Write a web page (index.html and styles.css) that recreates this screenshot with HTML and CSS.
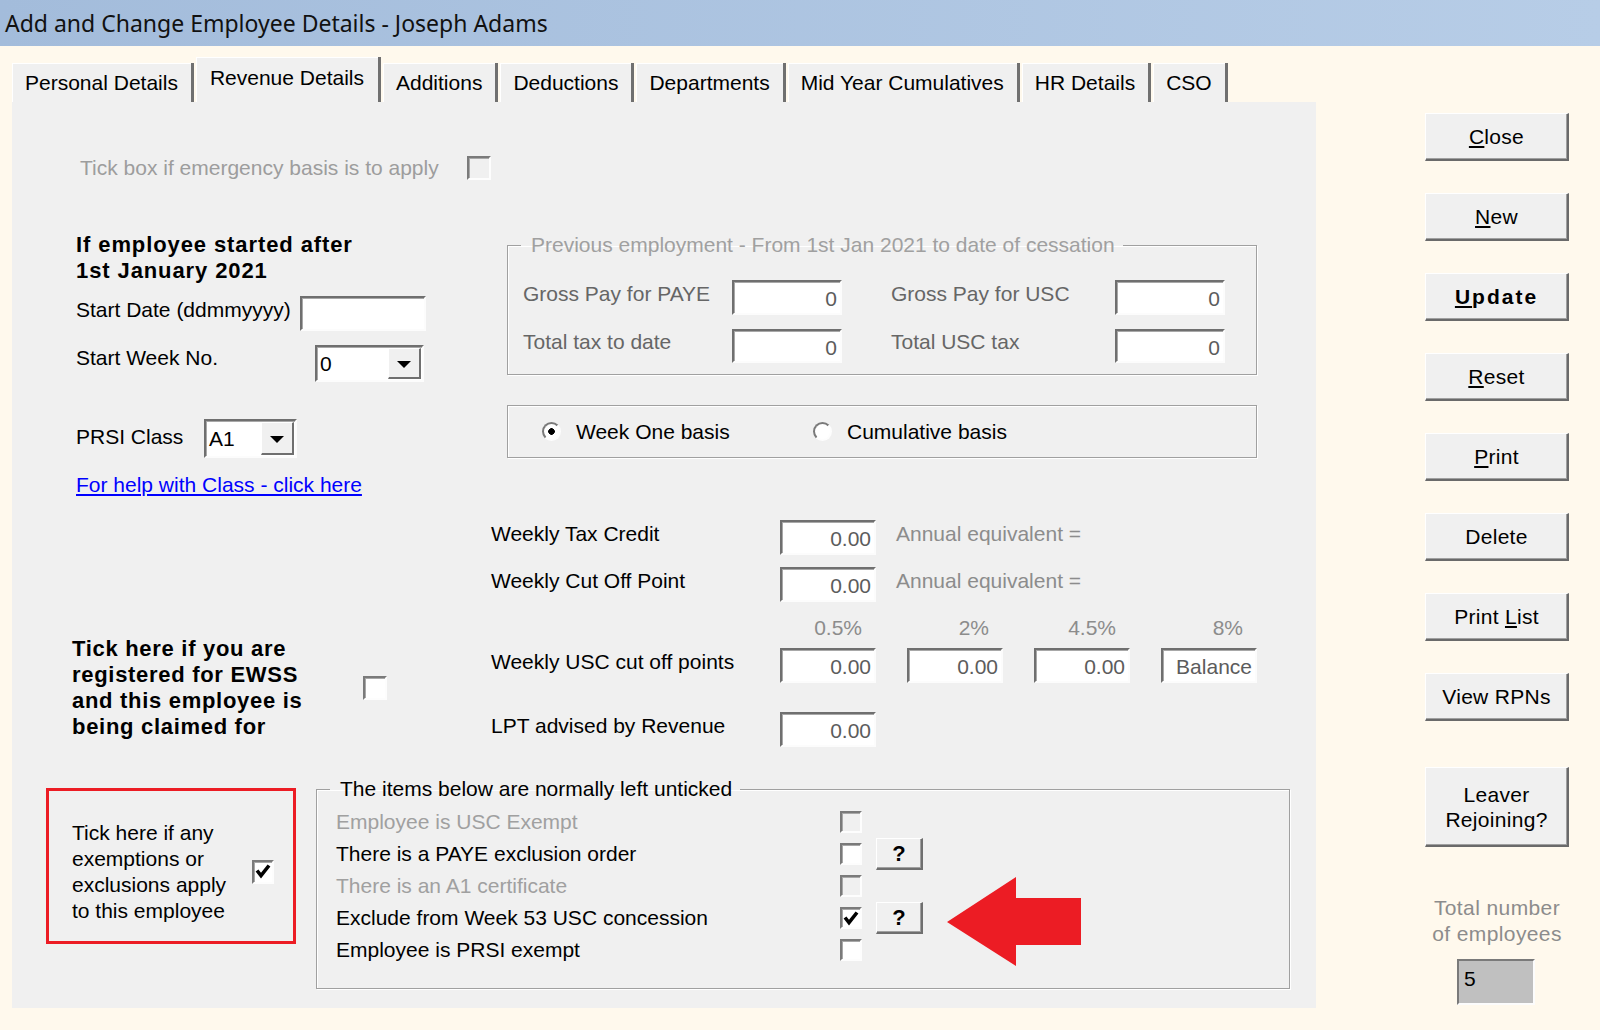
FILE: index.html
```html
<!DOCTYPE html>
<html lang="en">
<head>
  <meta charset="UTF-8">
  <title>Add and Change Employee Details - Joseph Adams</title>
  <link rel="stylesheet" href="styles.css">
</head>
<body>
  <div class="titlebar">Add and Change Employee Details - Joseph Adams</div>

  <div class="window">
    <div class="main">
      <div class="tabs">
        <div class="tab">Personal Details</div>
        <div class="tab active">Revenue Details</div>
        <div class="tab">Additions</div>
        <div class="tab">Deductions</div>
        <div class="tab">Departments</div>
        <div class="tab">Mid Year Cumulatives</div>
        <div class="tab">HR Details</div>
        <div class="tab">CSO</div>
      </div>

      <div class="panel">
        <div class="emergency">
          <span class="emergency-label">Tick box if emergency basis is to apply</span>
          <span class="chk off"></span>
        </div>

        <div class="upper">
          <div class="left-col">
            <div class="heading">If employee started after<br>1st January 2021</div>
            <div class="row start-date">
              <span class="lbl">Start Date (ddmmyyyy)</span>
              <span class="field"></span>
            </div>
            <div class="row start-week">
              <span class="lbl">Start Week No.</span>
              <span class="combo"><span class="combo-val">0</span><span class="combo-btn"></span></span>
            </div>
            <div class="row prsi">
              <span class="lbl">PRSI Class</span>
              <span class="combo"><span class="combo-val">A1</span><span class="combo-btn"></span></span>
            </div>
            <a class="help-link" href="#">For help with Class - click here</a>
            <div class="ewss">
              <div class="ewss-text">Tick here if you are<br>registered for EWSS<br>and this employee is<br>being claimed for</div>
              <span class="chk"></span>
            </div>
          </div>

          <div class="right-col">
            <fieldset class="prev">
              <legend>Previous employment - From 1st Jan 2021 to date of cessation</legend>
              <div class="prev-grid">
                <span class="dim">Gross Pay for PAYE</span>
                <span class="field num">0</span>
                <span class="dim lbl2">Gross Pay for USC</span>
                <span class="field num">0</span>
                <span class="dim">Total tax to date</span>
                <span class="field num">0</span>
                <span class="dim lbl2">Total USC tax</span>
                <span class="field num">0</span>
              </div>
            </fieldset>

            <div class="basis">
              <label class="radio-item"><span class="radio on"></span>Week One basis</label>
              <label class="radio-item"><span class="radio"></span>Cumulative basis</label>
            </div>

            <div class="wrow tax">
              <span class="wlbl">Weekly Tax Credit</span>
              <span class="field num w96">0.00</span>
              <span class="annual">Annual equivalent =</span>
            </div>
            <div class="wrow cut">
              <span class="wlbl">Weekly Cut Off Point</span>
              <span class="field num w96">0.00</span>
              <span class="annual">Annual equivalent =</span>
            </div>
            <div class="pct">
              <span>0.5%</span>
              <span>2%</span>
              <span>4.5%</span>
              <span>8%</span>
            </div>
            <div class="wrow usc">
              <span class="wlbl">Weekly USC cut off points</span>
              <span class="field num w96">0.00</span>
              <span class="field num w96">0.00</span>
              <span class="field num w96">0.00</span>
              <span class="field num w96">Balance</span>
            </div>
            <div class="wrow lpt">
              <span class="wlbl">LPT advised by Revenue</span>
              <span class="field num w96">0.00</span>
            </div>
          </div>
        </div>

        <div class="lower">
          <div class="highlight">
            <div class="hl-row">
              <div class="hl-text">Tick here if any<br>exemptions or<br>exclusions apply<br>to this employee</div>
              <span class="chk"><svg viewBox="0 0 19 19"><path d="M3 8.5 L7 13.5 L15 3.5" fill="none" stroke="#000" stroke-width="3.6"/></svg></span>
            </div>
          </div>

          <fieldset class="untick">
            <legend>The items below are normally left unticked</legend>
            <div class="item">
              <span class="item-lbl dim2">Employee is USC Exempt</span>
              <span class="chk off"></span>
            </div>
            <div class="item">
              <span class="item-lbl">There is a PAYE exclusion order</span>
              <span class="chk"></span>
              <span class="qbtn">?</span>
            </div>
            <div class="item">
              <span class="item-lbl dim2">There is an A1 certificate</span>
              <span class="chk off"></span>
            </div>
            <div class="item flagged">
              <span class="item-lbl">Exclude from Week 53 USC concession</span>
              <span class="chk"><svg viewBox="0 0 19 19"><path d="M3 8.5 L7 13.5 L15 3.5" fill="none" stroke="#000" stroke-width="3.6"/></svg></span>
              <span class="qbtn">?</span>
              <svg class="arrow" viewBox="0 0 134 89"><polygon points="0,45 69,0 69,21 134,21 134,68 69,68 69,89" fill="#ec1c24"/></svg>
            </div>
            <div class="item">
              <span class="item-lbl">Employee is PRSI exempt</span>
              <span class="chk"></span>
            </div>
          </fieldset>
        </div>
      </div>
    </div>

    <div class="side">
      <div class="btn"><span><u>C</u>lose</span></div>
      <div class="btn"><span><u>N</u>ew</span></div>
      <div class="btn update"><span><u>U</u>pdate</span></div>
      <div class="btn"><span><u>R</u>eset</span></div>
      <div class="btn"><span><u>P</u>rint</span></div>
      <div class="btn"><span>Delete</span></div>
      <div class="btn"><span>Print <u>L</u>ist</span></div>
      <div class="btn"><span>View RPNs</span></div>
      <div class="btn leaver"><span>Leaver<br>Rejoining?</span></div>
      <div class="total">Total number<br>of employees</div>
      <div class="count">5</div>
    </div>
  </div>
</body>
</html>
```

FILE: styles.css
```css
body {
  margin: 0;
  width: 1600px;
  height: 1030px;
  overflow: hidden;
  background: #fff9ed;
  font-family: "Liberation Sans", Arial, sans-serif;
  font-size: 21px;
  color: #000;
}
.titlebar {
  height: 46px;
  line-height: 46px;
  padding-left: 5px;
  background: linear-gradient(to right, #a3bcdb, #b7cde7);
  font-family: "Noto Sans", sans-serif;
  font-size: 23px;
  color: #111;
  white-space: nowrap;
}
.window {
  display: flex;
  padding-left: 12px;
}
.main { width: 1304px; }

/* tabs */
.tabs {
  display: flex;
  align-items: flex-end;
  height: 56px;
}
.tab {
  height: 39px;
  line-height: 39px;
  padding: 0 13px 0 13px;
  margin-right: 2px;
  background: #f0f0f0;
  border-right: 3px solid #707070;
  box-shadow: inset 1px 1px 0 #fff;
  white-space: nowrap;
}
.tab.active {
  height: 45px;
  line-height: 42px;
  padding: 0 14px 0 14px;
}

.panel {
  height: 906px;
  background: #f0f0f0;
  overflow: hidden;
}

/* shared widgets */
.chk {
  box-sizing: border-box;
  width: 23px;
  height: 23px;
  flex: none;
  background: #fff;
  border: 2px solid;
  border-color: #7a7a7a #fdfdfd #fdfdfd #7a7a7a;
  box-shadow: inset 1px 1px 0 #a8a8a8;
}
.chk.off { background: #f0f0f0; }
.chk svg { display: block; width: 19px; height: 19px; }
.field {
  box-sizing: border-box;
  display: block;
  flex: none;
  background: #fff;
  border: 2px solid;
  border-color: #6f6f6f #fcfcfc #fcfcfc #6f6f6f;
  box-shadow: inset 1px 1px 0 #a8a8a8;
  color: #5c5c5c;
}
.field.num {
  text-align: right;
  padding-right: 3px;
  line-height: 33px;
}
.combo {
  box-sizing: border-box;
  display: flex;
  flex: none;
  background: #fff;
  border: 2px solid;
  border-color: #6f6f6f #fcfcfc #fcfcfc #6f6f6f;
  box-shadow: inset 1px 1px 0 #a8a8a8;
}
.combo-val {
  flex: 1;
  padding-left: 3px;
  align-self: center;
}
.combo-btn {
  box-sizing: border-box;
  width: 33px;
  margin: 1px;
  background: #f0f0f0;
  border: 1px solid;
  border-width: 1px 2px 2px 1px;
  border-color: #fff #6f6f6f #6f6f6f #fff;
  display: flex;
  align-items: center;
  justify-content: center;
}
.combo-btn::after {
  content: "";
  border-left: 7px solid transparent;
  border-right: 7px solid transparent;
  border-top: 7px solid #000;
  margin-top: 3px;
}
.radio {
  box-sizing: border-box;
  width: 19px;
  height: 19px;
  flex: none;
  border-radius: 50%;
  border: 2px solid;
  border-color: #7a7a7a #fdfdfd #fdfdfd #7a7a7a;
  background: #fff;
}
.radio.on { background: radial-gradient(circle, #000 0 3px, #fff 3.6px); }

/* emergency line */
.emergency {
  display: flex;
  align-items: center;
  margin-top: 54px;
  padding-left: 68px;
  height: 24px;
  color: #9d9d9d;
}
.emergency-label { width: 387px; }
.emergency .chk { width: 24px; height: 24px; }

.upper {
  display: flex;
  margin-top: 52px;
}

/* left column */
.left-col {
  box-sizing: border-box;
  width: 479px;
  padding-left: 64px;
}
.heading {
  font-weight: bold;
  font-size: 22px;
  letter-spacing: 0.9px;
  line-height: 26px;
  white-space: nowrap;
}
.row {
  display: flex;
  align-items: center;
}
.lbl { white-space: nowrap; }
.start-date { margin-top: 12px; height: 35px; }
.start-date .lbl { width: 224px; margin-top: -8px; }
.start-date .field { width: 126px; height: 35px; }
.start-week { margin-top: 14px; height: 37px; }
.start-week .lbl { width: 239px; margin-top: -12px; }
.start-week .combo { width: 109px; height: 37px; }
.prsi { margin-top: 37px; height: 39px; }
.prsi .lbl { width: 128px; margin-top: -4px; }
.prsi .combo { width: 93px; height: 39px; }
.help-link {
  display: inline-block;
  margin-top: 14px;
  line-height: 26px;
  color: #0000ff;
  text-decoration: underline;
}
.ewss {
  display: flex;
  align-items: center;
  margin-top: 138px;
  margin-left: -4px;
}
.ewss-text {
  width: 291px;
  font-weight: bold;
  font-size: 22px;
  letter-spacing: 0.7px;
  line-height: 26px;
  white-space: nowrap;
}
.ewss .chk { width: 24px; height: 24px; }

/* right column */
.right-col { flex: 1; }
fieldset {
  margin: 0;
  min-width: 0;
  border: 1px solid #a0a0a0;
  box-shadow: 1px 1px 0 #fff, inset 1px 1px 0 #fff;
}
legend {
  line-height: 26px;
  white-space: nowrap;
}
.prev {
  box-sizing: border-box;
  width: 750px;
  margin-left: 16px;
  padding: 0 0 11px 15px;
}
.prev legend {
  margin-left: -2px;
  padding: 0 8px 0 10px;
  color: #a0a0a0;
}
.prev-grid {
  display: grid;
  grid-template-columns: 209px 110px 273px 110px;
  grid-template-rows: 35px 34px;
  row-gap: 14px;
  margin-top: 22px;
  align-items: center;
}
.prev-grid .field { height: 100%; }
.dim { color: #666; white-space: nowrap; margin-top: -8px; }
.lbl2 { padding-left: 49px; }
.basis {
  box-sizing: border-box;
  width: 750px;
  height: 53px;
  margin: 30px 0 0 16px;
  padding-left: 34px;
  display: flex;
  align-items: center;
  border: 1px solid #a0a0a0;
  box-shadow: 1px 1px 0 #fff, inset 1px 1px 0 #fff;
}
.radio-item {
  display: flex;
  align-items: center;
  gap: 15px;
  width: 271px;
  white-space: nowrap;
}
.wrow {
  display: flex;
  align-items: center;
  gap: 31px;
  height: 35px;
}
.wlbl {
  width: 289px;
  margin-right: -31px;
  margin-top: -8px;
  white-space: nowrap;
}
.w96 { width: 96px; height: 35px; }
.annual {
  margin-left: -11px;
  margin-top: -8px;
  color: #8c8c8c;
  white-space: nowrap;
}
.tax { margin-top: 62px; }
.cut { margin-top: 12px; }
.pct {
  display: flex;
  gap: 31px;
  margin-top: 13px;
  padding-left: 289px;
  line-height: 26px;
  color: #8c8c8c;
}
.pct span {
  box-sizing: border-box;
  width: 96px;
  text-align: right;
  padding-right: 14px;
}
.usc { margin-top: 7px; }
.lpt { margin-top: 29px; }

/* lower section */
.lower {
  display: flex;
  align-items: flex-start;
  margin-top: 29px;
}
.highlight {
  box-sizing: border-box;
  width: 250px;
  height: 156px;
  margin: 12px 0 0 34px;
  padding: 29px 0 0 23px;
  border: 3px solid #ec1c24;
}
.hl-row {
  display: flex;
  align-items: center;
}
.hl-text {
  width: 180px;
  line-height: 26px;
  white-space: nowrap;
}
.hl-row .chk { width: 22px; height: 24px; }
.untick {
  box-sizing: border-box;
  width: 974px;
  margin-left: 20px;
  padding: 0 0 22px 19px;
}
.untick legend {
  margin-left: -6px;
  padding: 0 8px 0 10px;
}
.item {
  display: flex;
  align-items: center;
  height: 32px;
}
.untick legend + .item { margin-top: 4px; }
.item-lbl {
  width: 504px;
  white-space: nowrap;
}
.dim2 { color: #a0a0a0; }
.item .chk { width: 22px; height: 22px; }
.qbtn {
  box-sizing: border-box;
  width: 47px;
  height: 32px;
  margin-left: 14px;
  background: #f0f0f0;
  border: 1px solid;
  border-width: 1px 2px 2px 1px;
  border-color: #fff #6f6f6f #6f6f6f #fff;
  box-shadow: inset -1px -1px 0 #a0a0a0;
  font-weight: bold;
  font-size: 22px;
  line-height: 29px;
  text-align: center;
}
.flagged { position: relative; }
.arrow {
  position: absolute;
  left: 611px;
  top: -25px;
  width: 134px;
  height: 89px;
}

/* side buttons */
.side {
  width: 144px;
  margin-left: 109px;
  padding-top: 67px;
  display: flex;
  flex-direction: column;
}
.btn {
  box-sizing: border-box;
  height: 48px;
  margin-bottom: 32px;
  display: flex;
  align-items: center;
  justify-content: center;
  background: #f0f0f0;
  border: 1px solid;
  border-width: 1px 2px 2px 1px;
  border-color: #fff #6a6a6a #6a6a6a #fff;
  box-shadow: inset -1px -1px 0 #a0a0a0;
  text-align: center;
  letter-spacing: 0.3px;
  white-space: nowrap;
}
.btn.update {
  font-weight: bold;
  letter-spacing: 2px;
}
.btn.leaver {
  height: 80px;
  margin-top: 14px;
  margin-bottom: 0;
  line-height: 25px;
}
.total {
  margin-top: 48px;
  text-align: center;
  line-height: 26px;
  color: #8c8c8c;
  letter-spacing: 0.4px;
}
.count {
  box-sizing: border-box;
  width: 78px;
  height: 46px;
  margin: 12px 0 0 32px;
  padding-left: 5px;
  line-height: 36px;
  background: #c0c0c0;
  border: 2px solid;
  border-color: #7a7a7a #fcfcfc #fcfcfc #7a7a7a;
}
```
